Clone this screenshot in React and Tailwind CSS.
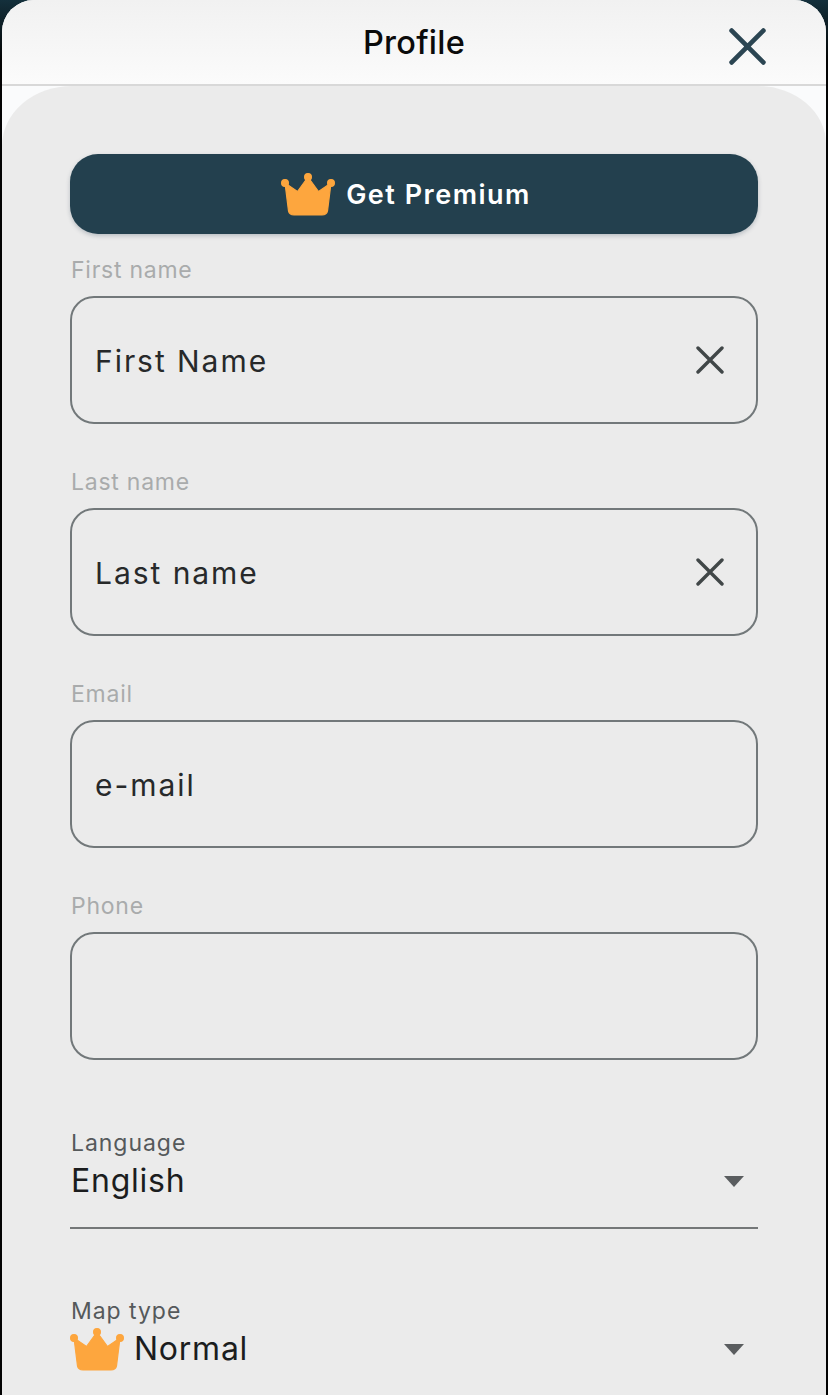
import React from 'react';

function Crown({ className }) {
    return (
        <svg viewBox="0 0 54 43" className={className} fill="#fda63e" stroke="#fda63e" strokeWidth="1.2" strokeLinejoin="round">
            <circle cx="4" cy="10" r="3.4" />
            <circle cx="27" cy="4" r="3.4" />
            <circle cx="50" cy="10" r="3.4" />
            <path d="M4 10 L16.5 18.5 L27 4 L37.5 18.5 L50 10 L46.5 38 Q45.8 42 41 42 H13 Q8.2 42 7.5 38 Z" />
        </svg>
    );
}

function CloseIcon({ className, color, width }) {
    return (
        <svg viewBox="0 0 28 28" className={className} fill="none" stroke={color} strokeWidth={width} strokeLinecap="round">
            <path d="M2 2 L26 26 M26 2 L2 26" />
        </svg>
    );
}

function Field({ label, value, clearable }) {
    return (
        <div className="mb-[45px]">
            <div className="h-[26px] ml-[1px] text-[23px] leading-[26px] tracking-[0.75px] text-[#a9abac] mb-[13px]">{label}</div>
            <div className="flex items-center justify-between h-[128px] rounded-[24px] border-2 border-[#72787a] pl-[23px] pr-[32px]">
                <span className="pt-[2px] text-[30px] tracking-[1.95px] text-[#27292a]">{value}</span>
                {clearable && <CloseIcon className="w-[28px] h-[28px]" color="#414748" width="3.4" />}
            </div>
        </div>
    );
}

function SelectField({ label, value, crown, underline }) {
    return (
        <div>
            <div className="h-[28px] ml-[1px] text-[23px] leading-[28px] tracking-[0.95px] text-[#55595b]">{label}</div>
            <div className="flex items-center justify-between h-[48px] pr-[14px]">
                <div className="flex items-center">
                    {crown && <Crown className="w-[54px] h-[43px] mr-[10px]" />}
                    <span className={`text-[32px] tracking-[0.75px] text-[#1b1d1e] ${crown ? '' : 'ml-[1px]'}`}>{value}</span>
                </div>
                <div className="w-0 h-0 border-l-[10px] border-r-[10px] border-t-[11px] border-l-transparent border-r-transparent border-t-[#5a5d5f]" />
            </div>
            {underline && <div className="mt-[22px] h-[2px] bg-[#747778]" />}
        </div>
    );
}

export default function App() {
    return (
        <div className="w-[828px] h-[1395px] overflow-hidden bg-[linear-gradient(#14303c_0,#030303_60px)] font-['Inter',sans-serif]">
            <div className="mx-[2px] h-full rounded-t-[32px] overflow-hidden bg-[#fafbfc]">
                <div className="grid grid-cols-[1fr_auto_1fr] items-center h-[86px] border-b-2 border-[#d8d8d8] bg-gradient-to-b from-[#f1f1f1] to-[#fbfbfb]">
                    <div />
                    <div className="pt-[3px] text-[32.5px] font-medium text-[#0b0b0b] tracking-[0.25px]">Profile</div>
                    <div className="flex justify-end pt-[8px] pr-[60px]">
                        <CloseIcon className="w-[37px] h-[37px]" color="#2b4552" width="3.6" />
                    </div>
                </div>
                <div className="h-[1309px] rounded-tl-[70px_60px] rounded-tr-[68px_58px] bg-[#ebebeb] px-[68px] pt-[68px]">
                    <div className="flex items-center justify-center h-[80px] pr-[16px] rounded-[28px] bg-[#23404e] shadow-[0_2px_4px_rgba(40,60,80,0.25)] mb-[23px]">
                        <Crown className="w-[54px] h-[43px] mr-[11px]" />
                        <span className="pt-[2px] text-[27px] font-semibold tracking-[1.5px] text-white">Get Premium</span>
                    </div>
                    <Field label="First name" value="First Name" clearable />
                    <Field label="Last name" value="Last name" clearable />
                    <Field label="Email" value="e-mail" />
                    <Field label="Phone" value="" />
                    <div className="mt-[69px] mb-[68px]">
                        <SelectField label="Language" value="English" underline />
                    </div>
                    <SelectField label="Map type" value="Normal" crown />
                </div>
            </div>
        </div>
    );
}
